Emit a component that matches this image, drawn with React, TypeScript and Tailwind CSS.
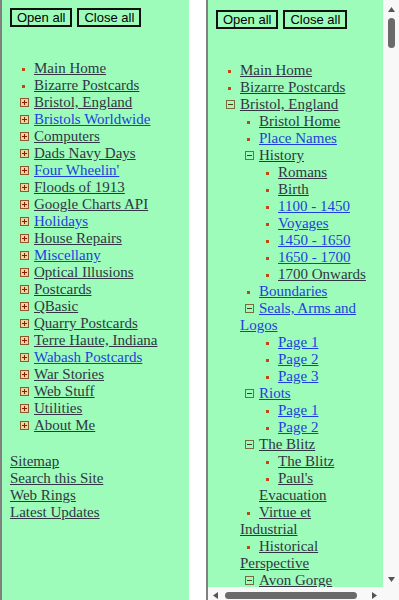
type Item = {
  label: string;
  blue?: boolean;
  folder?: boolean;
  open?: boolean;
  children?: Item[];
};

const leftTree: Item[] = [
  { label: "Main Home" },
  { label: "Bizarre Postcards" },
  { label: "Bristol, England", folder: true },
  { label: "Bristols Worldwide", folder: true, blue: true },
  { label: "Computers", folder: true },
  { label: "Dads Navy Days", folder: true },
  { label: "Four Wheelin'", folder: true, blue: true },
  { label: "Floods of 1913", folder: true },
  { label: "Google Charts API", folder: true },
  { label: "Holidays", folder: true, blue: true },
  { label: "House Repairs", folder: true },
  { label: "Miscellany", folder: true, blue: true },
  { label: "Optical Illusions", folder: true },
  { label: "Postcards", folder: true },
  { label: "QBasic", folder: true },
  { label: "Quarry Postcards", folder: true },
  { label: "Terre Haute, Indiana", folder: true },
  { label: "Wabash Postcards", folder: true, blue: true },
  { label: "War Stories", folder: true },
  { label: "Web Stuff", folder: true },
  { label: "Utilities", folder: true },
  { label: "About Me", folder: true },
];

const rightTree: Item[] = [
  { label: "Main Home" },
  { label: "Bizarre Postcards" },
  {
    label: "Bristol, England",
    folder: true,
    open: true,
    children: [
      { label: "Bristol Home" },
      { label: "Place Names", blue: true },
      {
        label: "History",
        folder: true,
        open: true,
        children: [
          { label: "Romans" },
          { label: "Birth" },
          { label: "1100 - 1450", blue: true },
          { label: "Voyages", blue: true },
          { label: "1450 - 1650", blue: true },
          { label: "1650 - 1700", blue: true },
          { label: "1700 Onwards" },
        ],
      },
      { label: "Boundaries", blue: true },
      {
        label: "Seals, Arms and Logos",
        folder: true,
        open: true,
        blue: true,
        children: [
          { label: "Page 1", blue: true },
          { label: "Page 2", blue: true },
          { label: "Page 3", blue: true },
        ],
      },
      {
        label: "Riots",
        folder: true,
        open: true,
        blue: true,
        children: [
          { label: "Page 1", blue: true },
          { label: "Page 2", blue: true },
        ],
      },
      {
        label: "The Blitz",
        folder: true,
        open: true,
        children: [{ label: "The Blitz" }, { label: "Paul's Evacuation" }],
      },
      { label: "Virtue et Industrial" },
      { label: "Historical Perspective" },
      { label: "Avon Gorge", folder: true, open: true, children: [] },
    ],
  },
];

function Marker({ kind }: { kind: "leaf" | "plus" | "minus" }) {
  return (
    <span className="inline-flex h-[9px] w-[19px] items-center align-middle">
      {kind === "leaf" ? (
        <span className="ml-[7px] h-[3px] w-[3px] bg-[#c0480c]" />
      ) : (
        <svg className="ml-[5px] -translate-y-[1px]" width="9" height="9" viewBox="0 0 9 9">
          <rect
            x="0.5"
            y="0.5"
            width="8"
            height="8"
            fill={kind === "plus" ? "#ead69c" : "none"}
            stroke={kind === "plus" ? "#8c5a2a" : "#7d6a3c"}
          />
          <path d="M2 4.5h5" stroke={kind === "plus" ? "#8b1a0a" : "#4a3a20"} />
          {kind === "plus" && <path d="M4.5 2v5" stroke="#8b1a0a" />}
        </svg>
      )}
    </span>
  );
}

function Tree({ items, className = "" }: { items: Item[]; className?: string }) {
  return (
    <ul className={className}>
      {items.map((it, i) => (
        <li key={i}>
          <Marker kind={it.folder ? (it.open ? "minus" : "plus") : "leaf"} />
          <a href="#" className={`underline ${it.blue ? "text-[#1d3fdc]" : "text-[#2f3742]"}`}>
            {it.label}
          </a>
          {it.open && it.children && it.children.length > 0 && (
            <Tree items={it.children} className="pl-[19px]" />
          )}
        </li>
      ))}
    </ul>
  );
}

function Buttons() {
  return (
    <div className="flex gap-[5px]">
      {["Open all", "Close all"].map((b) => (
        <button
          key={b}
          className="h-[19px] border-2 border-[#111] px-[5px] font-['Liberation_Sans',Arial,sans-serif] text-[13px] leading-[15px] text-black"
        >
          {b}
        </button>
      ))}
    </div>
  );
}

function Arrow({ dir }: { dir: "up" | "down" | "left" | "right" }) {
  const d = {
    up: "M3.5 0L7 5H0z",
    down: "M0 0h7L3.5 5z",
    left: "M5 0v7L0 3.5z",
    right: "M0 0l5 3.5L0 7z",
  }[dir];
  const vertical = dir === "up" || dir === "down";
  return (
    <svg width={vertical ? 7 : 5} height={vertical ? 5 : 7} viewBox={vertical ? "0 0 7 5" : "0 0 5 7"}>
      <path d={d} fill="#555" />
    </svg>
  );
}

export default function App() {
  return (
    <div className="flex h-[600px] w-[399px] gap-[17px] overflow-hidden bg-white font-['Liberation_Serif','Times_New_Roman',serif] text-[15px] leading-[17px]">
      {/* left: collapsed menu */}
      <div className="h-full w-[189px] shrink-0 border-l-2 border-[#808080] bg-[#9efcbb] pl-[8px] pt-[8px]">
        <Buttons />
        <Tree items={leftTree} className="mt-[33px] pl-[5px]" />
        <div className="mt-[19px] flex flex-col items-start">
          {["Sitemap", "Search this Site", "Web Rings", "Latest Updates"].map((l) => (
            <a key={l} href="#" className="text-[#2f3742] underline">
              {l}
            </a>
          ))}
        </div>
      </div>

      {/* right: expanded menu in a scrolling frame */}
      <div className="flex h-[603px] w-[193px] shrink-0 flex-col border-l-2 border-[#808080]">
        <div className="flex min-h-0 flex-1">
          <div className="min-w-0 flex-1 overflow-hidden bg-[#9efcbb] pl-[8px] pr-[14px] pt-[10px]">
            <Buttons />
            <Tree items={rightTree} className="mt-[33px] pl-[5px]" />
          </div>
          <div className="flex w-[16px] flex-col items-center bg-[#f8f8f8] pt-[7px] pb-[5px]">
            <Arrow dir="up" />
            <div className="mt-[6px] h-[30px] w-[7px] rounded-full bg-[#6a6a6a]" />
            <div className="flex-1" />
            <Arrow dir="down" />
          </div>
        </div>
        <div className="flex h-[16px] items-center bg-[#f8f8f8] pl-[5px]">
          <Arrow dir="left" />
          <div className="ml-[7px] h-[7px] w-[132px] rounded-full bg-[#6a6a6a]" />
          <div className="ml-[15px]">
            <Arrow dir="right" />
          </div>
        </div>
      </div>
    </div>
  );
}
